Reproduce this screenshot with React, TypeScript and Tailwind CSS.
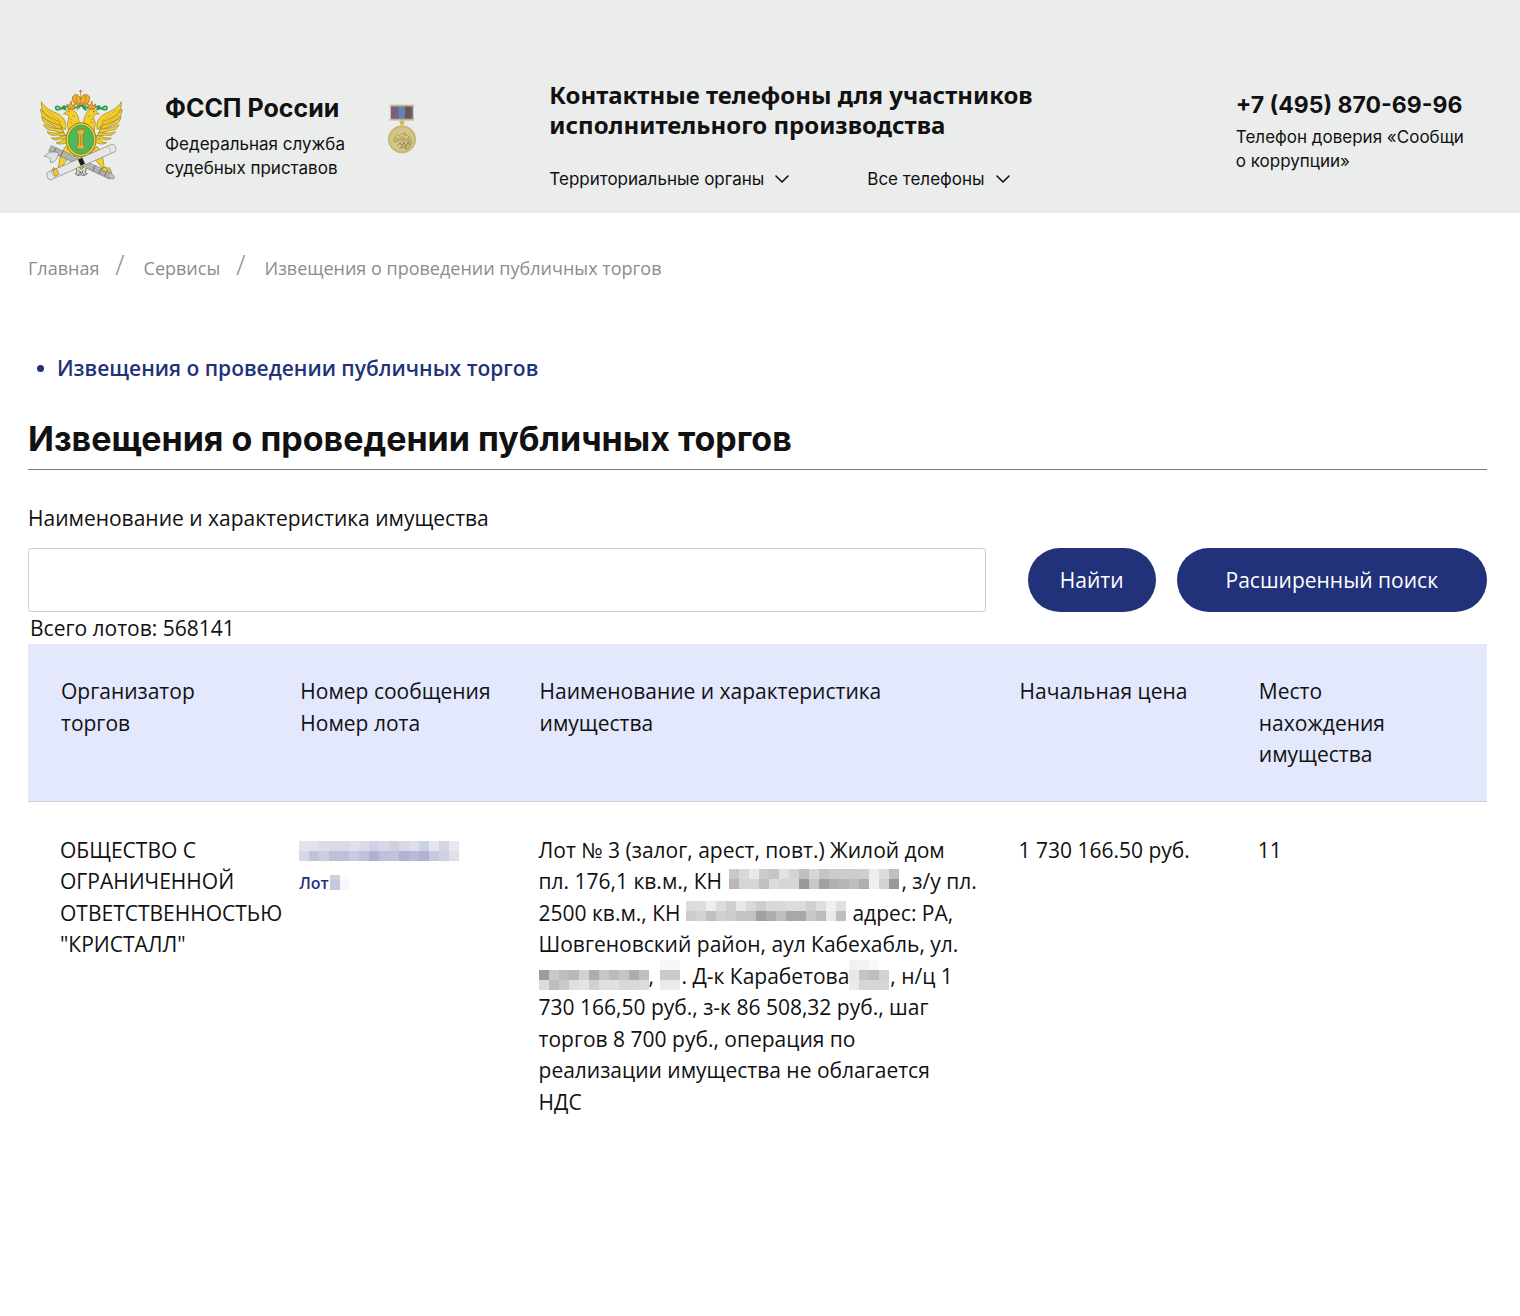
import type { ReactNode } from "react";

const CELL = 10;

// each row is a list of cell colours, "-" leaves the cell empty
const MASKS = {
  message: [
    "#e1e3ed #dfe1ec #dadce9 #d8dae7 #d8dae7 #dee0eb #dadce8 #cfd2e4 #d6d8e6 #cfd1e1 #d6d8e7 #dcdee9 #ccd0e3 #e3e6ee #d2d5e5 #e8e9f1",
    "#d5d8e8 #c0c4da #cbcde0 #bdc1d8 #bdc1d8 #c9cce0 #bfc2d9 #aeb3d1 #bec2d8 #c0c3db #aeb3d2 #b7bbd5 #aeb3d1 #c6cae0 #cfd2e3 #dddfeb",
  ],
  lot: ["#ced1e2 #fbfbfc", "#c5c9dd #f6f7f9"],
  firstNumber: [
    "#c9c9c9 #d8d8d8 #e9e9e9 #cccccc #c5c5c5 #e2e2e2 #d4d4d4 #c0c0c0 #d6d6d6 #c4c4c4 #cccccc #cccccc #cccccc #cfcfcf #eeeeee #dcdcdc #bfbfbf",
    "#b8b8b8 #d6d6d6 #d6d6d6 #c0c0c0 #dcdcdc #d6d6d6 #d6d6d6 #989898 #c8c8c8 #a2a2a2 #b0b0b0 #b6b6b6 #bebebe #aeaeae #f0f0f0 #d2d2d2 #989898",
  ],
  secondNumber: [
    "#dddddd #dddddd #eeeeee #dcdcdc #cfcfcf #e8e8e8 #d8d8d8 #cccccc #d8d8d8 #d8d8d8 #dcdcdc #dcdcdc #d0d0d0 #dedede #f0f0f0 #e0e0e0",
    "#cccccc #d4d4d4 #c0c0c0 #cfcfcf #cccccc #c4c4c4 #c2c2c2 #a0a0a0 #aeaeae #bebebe #a8a8a8 #a8a8a8 #c8c8c8 #bcbcbc #e9e9e9 #bfbfbf",
  ],
  street: [
    "#9c9c9c #c8c8c8 #bdbdbd #b8b8b8 #d2d2d2 #adadad #c6c6c6 #bbbbbb #c5c5c5 #adadad #bfbfbf",
    "#dcdcdc #bebebe #c9c9c9 #e0e0e0 #e5e5e5 #d0d0d0 #e0e0e0 #e0e0e0 #d8d8d8 #d8d8d8 #dcdcdc",
  ],
  house: ["#f8f8f8 #f8f8f8", "#cbcbcb #cbcbcb", "#eaeaea #eaeaea"],
  initials: ["#f2f2f2 #f2f2f2 #f8f8f8 -", "#e8e8e8 #c4c4c4 #bdbdbd #d2d2d2", "#ebebeb #d6d6d6 #d6d6d6 #d6d6d6"],
};

interface MaskProps {
  name: keyof typeof MASKS;
  top?: number;
  className?: string;
}

function Mask({ name, top = 0, className = "" }: MaskProps) {
  const rows = MASKS[name].map((r) => r.split(" "));
  const width = rows[0].length * CELL;
  const height = rows.length * CELL - top;
  return (
    <svg
      className={`-mt-2 inline ${className}`}
      width={width}
      height={height}
      viewBox={`0 ${top} ${width} ${height}`}
      shapeRendering="crispEdges"
      aria-hidden="true"
    >
      {rows.map((cells, y) =>
        cells.map((fill, x) =>
          fill === "-" ? null : (
            <rect key={`${x}-${y}`} x={x * CELL} y={y * CELL} width={CELL} height={CELL} fill={fill} />
          )
        )
      )}
    </svg>
  );
}

function Wing() {
  return (
    <g fill="#f4cf2e" stroke="#8f7a24" strokeWidth="2" strokeLinejoin="round">
      <path d="M64 67 C63 85 68 97 78 107 L136 151 C141 128 131 113 113 103 C91 94 73 84 64 67Z" />
      <path d="M62 89 C62 106 70 118 84 123 L128 151 L118 127 C92 115 72 106 62 89Z" />
      <path d="M65 112 C67 127 77 137 91 139 L130 156 L121 139 C99 131 78 126 65 112Z" />
      <path d="M71 136 C76 149 87 154 99 153 L133 163 L127 150 C108 147 86 146 71 136Z" />
      <path d="M81 157 C88 167 98 170 110 167 L137 170 L132 160 C115 161 97 163 81 157Z" />
      <path d="M94 176 C102 183 114 183 124 178 L142 182 L138 168 C122 172 109 178 94 176Z" />
      <path d="M108 190 C119 197 132 194 143 188 L150 178 L139 174 C130 182 121 190 108 190Z" />
      <path d="M76 91 L124 126 M74 108 L120 138 M80 128 L126 150" fill="none" stroke="#b5962a" strokeWidth="1.5" />
    </g>
  );
}

function EagleHalf() {
  return (
    <g>
      <Wing />
      {/* neck, head and beak */}
      <path
        d="M176 152 C180 124 175 103 159 91 C149 86 139 91 138 98 L130 104 L141 105 C152 110 144 119 142 132 L146 160Z"
        fill="#f4cf2e" stroke="#8f7a24" strokeWidth="2"
      />
      <circle cx="147" cy="97" r="1.8" fill="#5e5119" />
      <path d="M149 118 l8 5 M148 128 l9 5 M156 108 l9 5" stroke="#a2862a" strokeWidth="2" />
      {/* ribbon and small crown */}
      <path
        d="M174 78 C168 91 157 84 144 82 C132 78 125 91 116 91 C104 92 105 79 113 81 C121 85 123 91 134 87 C139 85 135 77 129 81 C126 85 132 92 139 90"
        fill="none" stroke="#2d9b4a" strokeWidth="5"
      />
      <path d="M144 89 L141 74 L148 79 L153 69 L158 79 L165 74 L163 89Z" fill="#e8a52b" stroke="#9a6421" strokeWidth="2" />
      <circle cx="153" cy="67" r="3" fill="#d78c28" />
      {/* leg and claws */}
      <path
        d="M137 201 C128 213 122 225 119 240 L115 266 L108 278 L101 264 L94 276 L97 288 L105 281 L114 287 L119 277 L127 280 L123 264 L140 244 L155 218Z"
        fill="#f4cf2e" stroke="#8f7a24" strokeWidth="2"
      />
    </g>
  );
}

function Emblem() {
  return (
    <svg width="90" height="94" viewBox="48 26 270 282" role="img" aria-label="Герб ФССП России">
      <EagleHalf />
      <g transform="matrix(-1 0 0 1 368 0)">
        <EagleHalf />
      </g>
      <path d="M158 222 L210 222 L200 256 L184 266 L168 256Z" fill="#f4cf2e" stroke="#8f7a24" strokeWidth="2" />
      {/* main crown */}
      <path d="M170 94 L176 77 L191 77 L203 95 L192 92 L184 81Z" fill="#2d9b4a" />
      <path
        d="M164 73 C155 61 154 48 168 46 C174 45 179 52 182 60 C186 50 190 44 199 46 C212 49 210 62 203 73 Q183 79 164 73Z"
        fill="#efb02f" stroke="#a26a20" strokeWidth="2.5"
      />
      <path d="M182 42 V72 M169 50 V69 M196 50 V69" stroke="#b87422" strokeWidth="2" />
      <path d="M182 31 V43 M177 36 H187" stroke="#c2802c" strokeWidth="3" />
      <path d="M162 69 H204 V76 H162Z" fill="#d98f27" />
      {/* shield */}
      <ellipse cx="183" cy="181" rx="45" ry="51" fill="#f1ce35" stroke="#8f7a24" strokeWidth="3" />
      <ellipse cx="183" cy="181" rx="38" ry="44" fill="#4eb857" stroke="#4f8c3b" strokeWidth="2" />
      <path
        d="M172 148 h4 v4 h4 v-4 h5 v4 h4 v-4 h4 v12 l-4 4 v33 l4 4 v8 h-22 v-8 l4 -4 v-33 l-4 -4Z"
        fill="#dfb638" stroke="#8c7926" strokeWidth="2"
      />
      <path d="M182 166 V198" stroke="#8c7926" strokeWidth="2" />
      {/* fasces with the axe */}
      <path d="M94 199 L276 282 L269 299 L86 215Z" fill="#b9bab9" stroke="#777978" strokeWidth="2" />
      <path d="M96 206 L264 286 M92 213 L262 292" stroke="#8c8e8d" strokeWidth="1.5" />
      <path d="M109 205 L100 222 M130 214 L122 231 M226 259 L218 276 M244 267 L236 284 M260 275 L253 292" stroke="#6d6f6e" strokeWidth="3" />
      <path d="M116 221 C113 239 105 249 91 250 C94 239 86 230 72 232 C83 219 98 214 116 221Z" fill="#dedfde" stroke="#7c7e7d" strokeWidth="2" />
      <path d="M268 278 L283 291 L281 299 L264 295Z" fill="#c4c5c4" stroke="#747675" strokeWidth="2" />
      {/* scroll */}
      <path d="M81 280 L275 195 C286 194 291 208 285 217 L91 302 C82 300 79 289 81 280Z" fill="#e5e6e5" stroke="#7c7e7d" strokeWidth="2" />
      <path d="M93 278 L104 296 M264 202 Q273 211 271 222" fill="none" stroke="#a4a6a5" strokeWidth="2" />
      <path d="M174 241 L187 235 L195 253 L182 259Z" fill="#1d1d1d" />
      <path d="M98 274 L109 268 L117 285 L105 291Z M247 265 L260 264 L262 277 L249 276Z" fill="#edc936" stroke="#8f7a24" strokeWidth="2" />
      {/* tail */}
      <path d="M169 267 L176 263 L184 270 L192 263 L198 268 L196 280 L202 283 L192 289 L183 286 L174 289 L165 283 L171 279Z" fill="#d9d9d6" stroke="#3c3c3a" strokeWidth="2" />
      <path d="M177 273 L183 282 L190 273 M175 286 L180 279 M192 286 L187 279" fill="none" stroke="#2f2f2f" strokeWidth="2" />
      <path d="M168 264 L177 260 L172 270Z M190 260 L200 264 L195 270Z" fill="#f4cf2e" />
    </svg>
  );
}

function Medal() {
  return (
    <svg width="28" height="50" viewBox="54 42 84 150" role="img" aria-label="Медаль">
      <rect x="61" y="48" width="69" height="39" fill="#526b9c" />
      <rect x="67" y="48" width="16" height="39" fill="#855c78" />
      <rect x="86" y="48" width="18" height="39" fill="#6384b9" />
      <rect x="107" y="48" width="16" height="39" fill="#735448" />
      <path d="M58 47 H133 M58 89 H133" stroke="#c2b38a" strokeWidth="5" />
      <path d="M61 45 V92 M130 45 V92" stroke="#d8cda9" strokeWidth="3" />
      <path d="M88 92 h16 l-3 12 h-10Z" fill="#ccb55e" />
      <circle cx="96" cy="148" r="41" fill="#c9bb75" stroke="#b6a968" strokeWidth="2" />
      <circle cx="96" cy="148" r="36" fill="#d2c587" />
      <path
        d="M69 157 C70 136 80 128 89 135 C98 121 110 126 113 137 C124 139 128 149 124 159 C114 151 102 158 92 153 C83 151 77 163 69 157Z"
        fill="#bdae6b"
      />
      <path d="M83 166 l8 -8 4 10 8 -12 4 16 8 -17 4 12 5 -9 M88 175 l12 -5 10 8 10 -8" fill="none" stroke="#8f814c" strokeWidth="3" />
      <path d="M78 137 l9 6 9 -9 8 8 10 -2" fill="none" stroke="#e6dca8" strokeWidth="3" />
    </svg>
  );
}

function MenuButton({ children }: { children: ReactNode }) {
  return (
    <button type="button" aria-haspopup="menu" className="flex items-center gap-2.5 text-[17px] leading-6">
      {children}
      <svg width="16" height="10" viewBox="0 0 16 10" fill="none" stroke="currentColor" strokeWidth="1.6" aria-hidden="true">
        <path d="M2 2 L8 8 L14 2" strokeLinecap="round" strokeLinejoin="round" />
      </svg>
    </button>
  );
}

function Header() {
  return (
    <header className="grid grid-cols-[521fr_686fr_252fr] bg-[#ebedec] pt-20 pr-8 pb-[22px] pl-7 font-['Inter',sans-serif]">
      <div className="flex items-start pl-2">
        <div className="mt-2">
          <Emblem />
        </div>
        <div className="mt-3 ml-[39px] w-[223px]">
          <p className="text-[25px] leading-8 font-bold">ФССП России</p>
          <p className="mt-2 text-[17px] leading-6">
            Федеральная служба
            <br />
            судебных приставов
          </p>
        </div>
        <div className="mt-6">
          <Medal />
        </div>
      </div>

      <div>
        <h2 className="font-['Noto_Sans',sans-serif] text-[24px] leading-[30px] font-bold">
          Контактные телефоны для участников
          <br />
          исполнительного производства
        </h2>
        <div className="mt-[27px] flex gap-[77px]">
          <MenuButton>Территориальные органы</MenuButton>
          <MenuButton>Все телефоны</MenuButton>
        </div>
      </div>

      <div className="pt-[9px]">
        <a href="tel:+74958706996" className="block text-[23px] leading-8 font-bold whitespace-nowrap">
          +7 (495) 870-69-96
        </a>
        <p className="mt-1 text-[17px] leading-6 whitespace-nowrap">
          Телефон доверия «Сообщи
          <br />
          о коррупции»
        </p>
      </div>
    </header>
  );
}

function Breadcrumbs() {
  return (
    <nav aria-label="Навигация" className="mt-9 flex h-8 items-baseline text-[18px] leading-8 text-[#8c8c8c]">
      <a href="#">Главная</a>
      <span className="mr-[19px] ml-4 text-[27px] font-light">/</span>
      <a href="#">Сервисы</a>
      <span className="mr-[19px] ml-4 text-[27px] font-light">/</span>
      <span>Извещения о проведении публичных торгов</span>
    </nav>
  );
}

export default function App() {
  return (
    <div className="min-h-screen bg-white text-[#111111]">
      <Header />
      <main className="pr-[33px] pb-40 pl-7 font-['Open_Sans',sans-serif] text-[21px] leading-8">
        <Breadcrumbs />

        <ul className="mt-[71px] pl-[9px]">
          <li className="flex items-center gap-[13px] font-semibold text-[#21327a]">
            <span className="size-[7px] rounded-full bg-[#21327a]" />
            <a href="#">Извещения о проведении публичных торгов</a>
          </li>
        </ul>

        <h1 className="mt-[35px] border-b border-[#7d7d7d] pb-[10px] font-['Inter',sans-serif] text-[34px] leading-10 font-bold">
          Извещения о проведении публичных торгов
        </h1>

        <form className="mt-8" onSubmit={(e) => e.preventDefault()}>
          <label htmlFor="property" className="block">
            Наименование и характеристика имущества
          </label>
          <div className="mt-[14px] flex h-16">
            <input id="property" type="text" className="min-w-0 flex-1 rounded-[3px] border border-[#cccccc] px-4" />
            <button type="submit" className="ml-[42px] rounded-full bg-[#21327a] px-8 text-white">
              Найти
            </button>
            <button type="button" className="ml-[21px] rounded-full bg-[#21327a] px-[49px] text-white">
              Расширенный поиск
            </button>
          </div>
        </form>

        <p className="pl-0.5">Всего лотов: 568141</p>

        <table className="w-full table-fixed text-left leading-normal">
          <thead>
            <tr className="border-b border-[#cdd0dc] bg-[#e3e8fd] align-top [&>th]:pt-8 [&>th]:pr-2 [&>th]:pb-[30px] [&>th]:pl-[33px] [&>th]:font-normal">
              <th className="w-[16.4%]">Организатор торгов</th>
              <th className="w-[16.4%]">
                Номер сообщения
                <br />
                Номер лота
              </th>
              <th className="w-[32.9%]">Наименование и характеристика имущества</th>
              <th className="w-[16.4%]">Начальная цена</th>
              <th>
                Место
                <br />
                нахождения
                <br />
                имущества
              </th>
            </tr>
          </thead>
          <tbody>
            <tr className="align-top [&>td]:pt-[33px] [&>td]:pr-2 [&>td]:pl-8">
              <td>ОБЩЕСТВО С ОГРАНИЧЕННОЙ ОТВЕТСТВЕННОСТЬЮ "КРИСТАЛЛ"</td>
              <td>
                <a href="#" className="block">
                  <Mask name="message" className="align-[-3px]" />
                </a>
                <a href="#" className="block text-[16px] leading-[34px] font-semibold text-[#21327a]">
                  Лот
                  <Mask name="lot" top={5} className="ml-px align-[-1px]" />
                </a>
              </td>
              <td>
                Лот № 3 (залог, арест, повт.) Жилой дом
                <br />
                пл. 176,1 кв.м., КН <Mask name="firstNumber" className="mx-0.5 align-baseline" />, з/у пл.
                <br />
                2500 кв.м., КН <Mask name="secondNumber" className="mr-px align-baseline" /> адрес: РА,
                <br />
                Шовгеновский район, аул Кабехабль, ул.
                <br />
                <Mask name="street" className="align-[-6px]" />, <Mask name="house" className="mx-px align-[-6px]" />. Д-к
                Карабетова
                <Mask name="initials" className="mr-px align-[-6px]" />, н/ц 1
                <br />
                730 166,50 руб., з-к 86 508,32 руб., шаг
                <br />
                торгов 8 700 руб., операция по
                <br />
                реализации имущества не облагается
                <br />
                НДС
              </td>
              <td>1 730 166.50 руб.</td>
              <td>11</td>
            </tr>
          </tbody>
        </table>
      </main>
    </div>
  );
}
